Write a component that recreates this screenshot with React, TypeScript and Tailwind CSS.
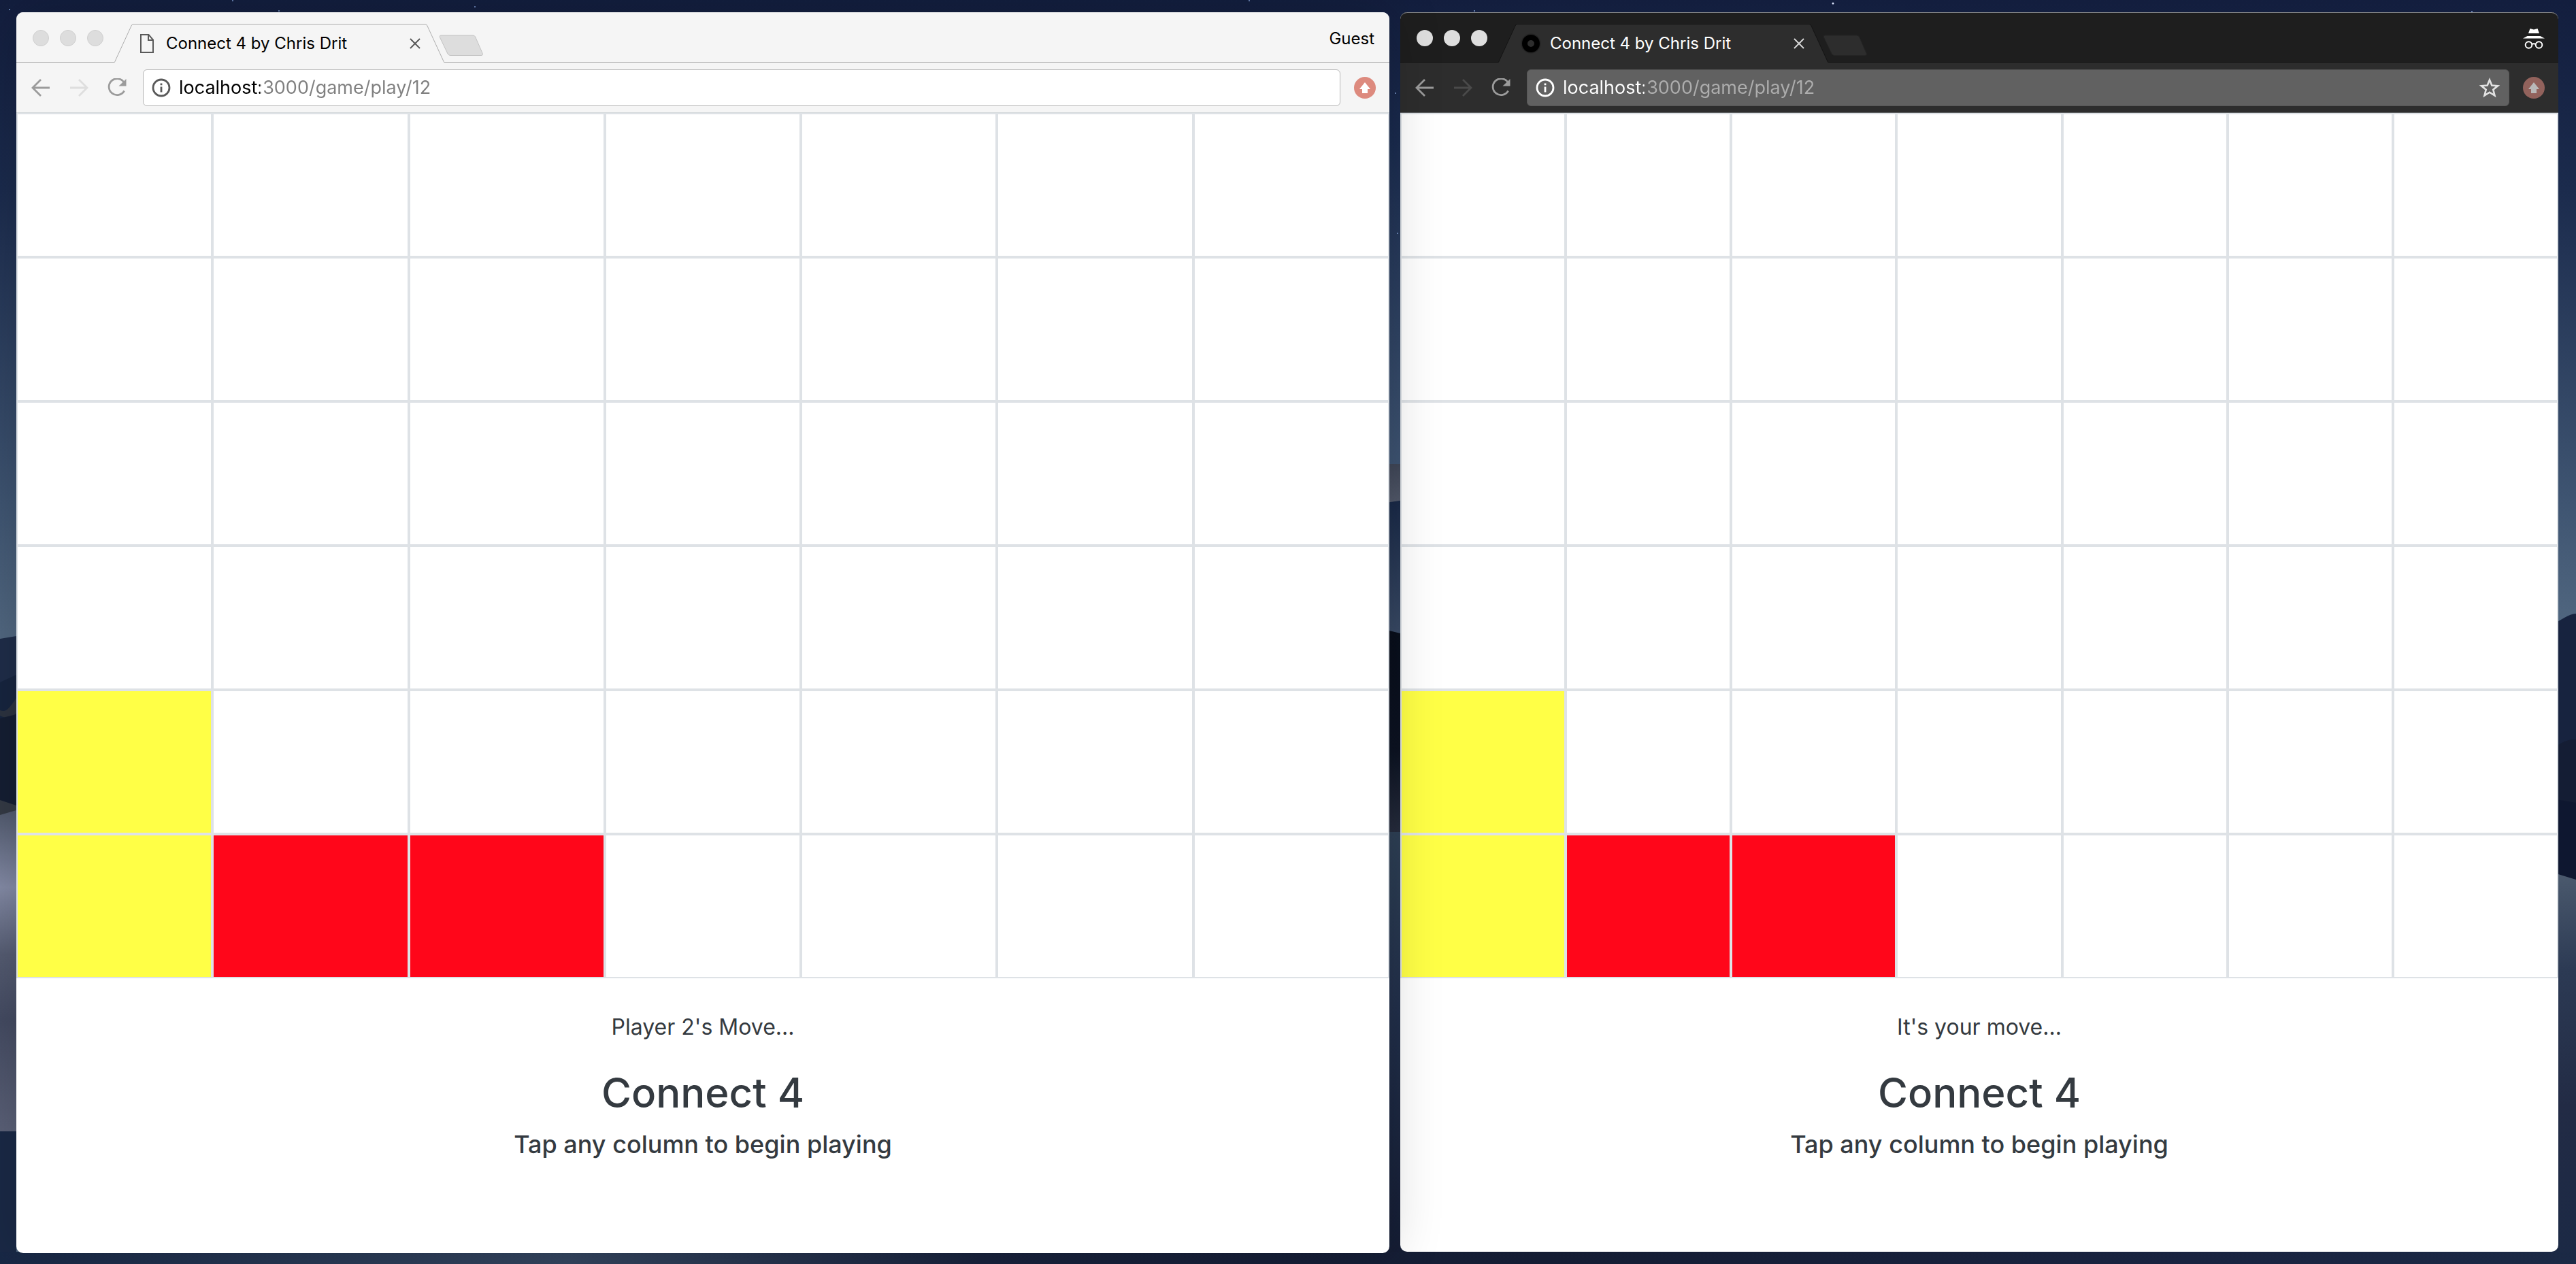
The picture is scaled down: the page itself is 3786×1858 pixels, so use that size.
import React from "react";

type Disc = "empty" | "yellow" | "red";

const COLUMNS: Disc[][] = [
  ["empty", "empty", "empty", "empty", "yellow", "yellow"],
  ["empty", "empty", "empty", "empty", "empty", "red"],
  ["empty", "empty", "empty", "empty", "empty", "red"],
  ["empty", "empty", "empty", "empty", "empty", "empty"],
  ["empty", "empty", "empty", "empty", "empty", "empty"],
  ["empty", "empty", "empty", "empty", "empty", "empty"],
  ["empty", "empty", "empty", "empty", "empty", "empty"],
];

const DISC_CLASS: Record<Disc, string> = {
  empty: "bg-white",
  yellow: "bg-[#ffff46]",
  red: "bg-[#ff061a]",
};

const LIGHT = {
  frame: "z-10 shadow-[0_0_80px_rgba(0,0,0,0.18)]",
  top: "border-transparent",
  strip: "bg-[#f5f5f5] border-[#acacac]",
  dot: "bg-[#dddddd] border border-[#cfcfcf]",
  tabFill: "#f5f5f5",
  tabStroke: "#acacac",
  title: "text-black",
  close: "#5a5a5a",
  newFill: "#dddddd",
  newStroke: "#c2c2c2",
  toolbar: "bg-[#f5f5f5] border-[#d5d9dc]",
  nav: "#9b9b9b",
  navOff: "#dedede",
  box: "bg-white border-[#b7b7b7]",
  info: "#5a5a5a",
  url: "bg-[linear-gradient(to_right,#000_0,#000_119px,#808080_119px)]",
  badge: "#dd8a7e",
  arrow: "#ffffff",
};

const DARK: typeof LIGHT = {
  frame: "mb-0.5",
  top: "border-[#8a8a8a]",
  strip: "bg-[#1e1e1e] border-[#141414]",
  dot: "bg-[#dedede]",
  tabFill: "#2d2d2d",
  tabStroke: "#141414",
  title: "text-white",
  close: "#d5d5d5",
  newFill: "#2d2d2d",
  newStroke: "#242424",
  toolbar: "bg-[#2d2d2d] border-[#5c5e60]",
  nav: "#9b9b9b",
  navOff: "#4a4a4a",
  box: "bg-[#616161] border-[#565656]",
  info: "#ffffff",
  url: "bg-[linear-gradient(to_right,#fff_0,#fff_119px,#adadad_119px)]",
  badge: "#92625c",
  arrow: "#b9b9b9",
};

function Wallpaper() {
  return (
    <svg
      className="absolute inset-0 h-full w-full"
      viewBox="0 0 3786 1858"
      preserveAspectRatio="none"
      aria-hidden="true"
    >
      <defs>
        <linearGradient id="sky" x1="0" y1="0" x2="0" y2="1">
          <stop offset="0" stopColor="#131e3e" />
          <stop offset="0.15" stopColor="#1b2b4d" />
          <stop offset="0.4" stopColor="#3f5572" />
          <stop offset="0.5" stopColor="#516780" />
        </linearGradient>
        <linearGradient id="skyMid" x1="0" y1="0" x2="0" y2="1">
          <stop offset="0" stopColor="#131e3e" />
          <stop offset="0.3" stopColor="#1a2b4e" />
          <stop offset="1" stopColor="#3e5472" />
        </linearGradient>
        <linearGradient id="dune" x1="0" y1="0" x2="0" y2="1">
          <stop offset="0" stopColor="#515a6e" />
          <stop offset="0.24" stopColor="#848ba6" />
          <stop offset="0.45" stopColor="#555c72" />
          <stop offset="0.65" stopColor="#444b62" />
          <stop offset="1" stopColor="#5b6178" />
        </linearGradient>
        <linearGradient id="ridge" x1="0" y1="0" x2="0" y2="1">
          <stop offset="0" stopColor="#3f4657" />
          <stop offset="1" stopColor="#535a6b" />
        </linearGradient>
        <linearGradient id="slope" x1="0" y1="0" x2="0" y2="1">
          <stop offset="0" stopColor="#192947" />
          <stop offset="1" stopColor="#3a4b66" />
        </linearGradient>
        <linearGradient id="shade" x1="0" y1="0" x2="0" y2="1">
          <stop offset="0" stopColor="#080e1b" />
          <stop offset="0.6" stopColor="#0c1322" />
          <stop offset="1" stopColor="#262c3d" />
        </linearGradient>
        <linearGradient id="sandMid" x1="0" y1="0" x2="0" y2="1">
          <stop offset="0" stopColor="#2e4055" />
          <stop offset="0.4" stopColor="#22304b" />
          <stop offset="1" stopColor="#141c33" />
        </linearGradient>
        <linearGradient id="sandRight" x1="0" y1="0" x2="0" y2="1">
          <stop offset="0" stopColor="#4b5a6e" />
          <stop offset="0.25" stopColor="#2c3a54" />
          <stop offset="0.6" stopColor="#222b45" />
          <stop offset="1" stopColor="#1b2945" />
        </linearGradient>
        <linearGradient id="floor" x1="0" y1="0" x2="1" y2="0">
          <stop offset="0" stopColor="#182846" />
          <stop offset="0.22" stopColor="#34455f" />
          <stop offset="0.38" stopColor="#18223c" />
          <stop offset="0.6" stopColor="#141c33" />
          <stop offset="0.85" stopColor="#192340" />
          <stop offset="1" stopColor="#1b2945" />
        </linearGradient>
      </defs>
      <rect width="3786" height="1858" fill="url(#sky)" />
      <rect x="1000" width="1800" height="684" fill="url(#skyMid)" />
      <g>
        <path d="M0 939L24 935V1200H0Z" fill="#1f2d49" />
        <path d="M0 1003L24 992V1200H0Z" fill="#17253f" />
        <path d="M0 1044C10 1048 14 1040 24 1026V1048C16 1058 8 1056 0 1052Z" fill="#2c3340" />
        <path d="M0 1056L24 1050V1210H0Z" fill="#151e33" />
        <path d="M0 1176L24 1184V1200H0Z" fill="#343a45" />
        <path d="M0 1198L24 1191V1664H0Z" fill="url(#dune)" />
        <rect y="1663" width="24" height="195" fill="#1a2946" />
      </g>
      <g>
        <rect x="2030" y="682" width="40" height="60" fill="url(#ridge)" />
        <path d="M2030 740L2070 734V940H2030Z" fill="url(#slope)" />
        <path d="M2030 924L2070 934V1224H2030Z" fill="url(#shade)" />
        <rect x="2030" y="1223" width="40" height="635" fill="url(#sandMid)" />
      </g>
      <g>
        <path d="M3750 918C3765 912 3775 902 3786 902V1300H3750Z" fill="#17233f" />
        <path d="M3750 1102C3762 1092 3775 1086 3786 1087V1300H3750Z" fill="#141d34" />
        <path d="M3750 1174L3786 1180V1300H3750Z" fill="#0e1730" />
        <path d="M3750 1282L3786 1293V1858H3750Z" fill="url(#sandRight)" />
      </g>
      <rect y="1840" width="3786" height="18" fill="url(#floor)" />
      <g fill="#7f9cd0">
        <circle cx="14" cy="14" r="1" />
        <circle cx="342" cy="1" r="1" />
        <circle cx="410" cy="16" r="1" />
        <circle cx="698" cy="10" r="1" />
        <circle cx="1836" cy="1" r="1" />
        <circle cx="2167" cy="16" r="1" />
        <circle cx="2694" cy="5" r="1.5" fill="#dfe8ff" />
        <circle cx="3633" cy="17" r="1" />
        <circle cx="2051" cy="137" r="1" />
        <circle cx="2054" cy="343" r="1" />
      </g>
    </svg>
  );
}

function DocumentIcon() {
  return (
    <svg className="h-7 w-5" viewBox="0 0 20 28" fill="none" stroke="#5a5a5a" strokeWidth="2">
      <path d="M1 1H12.5L19 8.5V27H1Z" />
      <path d="M12 1V9H19" />
    </svg>
  );
}

function RingIcon() {
  return (
    <svg className="h-8 w-8 shrink-0" viewBox="0 0 32 32">
      <circle cx="16" cy="16" r="14.5" fill="#242424" />
      <circle cx="16" cy="16" r="9" fill="#2d2d2d" stroke="#000" strokeWidth="8" />
    </svg>
  );
}

function IncognitoIcon() {
  return (
    <svg className="h-8 w-8" viewBox="0 0 32 32">
      <path d="M10.5 1L16 2.6L21.5 1L24 8H8Z" fill="#fff" />
      <path d="M6.5 12H25.5L32 15.5H0Z" fill="#fff" />
      <g fill="none" stroke="#fff" strokeWidth="2">
        <circle cx="8.5" cy="25" r="4.8" />
        <circle cx="23.5" cy="25" r="4.8" />
        <path d="M13 24Q16 22.5 19 24" />
      </g>
    </svg>
  );
}

function ArrowIcon({ color, flip }: { color: string; flip?: boolean }) {
  return (
    <svg
      className={flip ? "h-7 w-7 rotate-180" : "h-7 w-7"}
      viewBox="0 0 28 28"
      fill="none"
      stroke={color}
      strokeWidth="2.8"
    >
      <path d="M27 14H2.5M14 2L2 14L14 26" />
    </svg>
  );
}

function ReloadIcon({ color }: { color: string }) {
  return (
    <svg className="h-7 w-7" viewBox="0 0 28 28">
      <path d="M23.8 5.5A12 12 0 1 0 24.6 18.5" fill="none" stroke={color} strokeWidth="2.8" />
      <path d="M27.5 1V11.5H16.5Z" fill={color} />
    </svg>
  );
}

function InfoIcon({ color }: { color: string }) {
  return (
    <svg className="h-7 w-7 shrink-0" viewBox="0 0 28 28">
      <circle cx="14" cy="14" r="12" fill="none" stroke={color} strokeWidth="2.8" />
      <path d="M12.6 12.5H15.4V20.5H12.6ZM12.6 7.5H15.4V10.3H12.6Z" fill={color} />
    </svg>
  );
}

function StarIcon() {
  return (
    <svg className="h-8 w-8" viewBox="0 0 32 32" fill="none" stroke="#e2e2e2" strokeWidth="2.6">
      <path d="M16 4.5L19.3 12.6L28 13.2L21.3 18.8L23.5 27.4L16 22.7L8.5 27.4L10.7 18.8L4 13.2L12.7 12.6Z" />
    </svg>
  );
}

function UploadBadge({ color, arrow }: { color: string; arrow: string }) {
  return (
    <svg className="h-8 w-8" viewBox="0 0 32 32">
      <circle cx="16" cy="16" r="16" fill={color} />
      <path d="M16 8L24 18H20V24H12V18H8Z" fill={arrow} />
    </svg>
  );
}

interface BrowserProps {
  name: string;
  incognito?: boolean;
  status: string;
}

function Browser({ name, incognito = false, status }: BrowserProps) {
  const t = incognito ? DARK : LIGHT;
  return (
    <section
      aria-label={name}
      className={`relative flex min-w-0 flex-col overflow-hidden rounded-[10px] bg-white ${t.frame}`}
    >
      <header>
        <div className={`flex h-[74px] items-end border-b pl-6 pr-5 ${t.strip}`}>
          <div className="flex h-full items-center gap-4 pb-px pt-1">
            <button aria-label="Close window" className={`size-6 rounded-full ${t.dot}`} />
            <button aria-label="Minimize window" className={`size-6 rounded-full ${t.dot}`} />
            <button aria-label="Zoom window" className={`size-6 rounded-full ${t.dot}`} />
          </div>
          <div className="relative -mb-px ml-4 h-[57px] w-[485px]">
            <svg className="absolute inset-0 h-full w-full" viewBox="0 0 485 57" aria-hidden="true">
              <path
                d="M0 57V56.5Q1 56.5 2 53L25 3Q26 .5 28 .5H457Q459 .5 460 3L483 53Q484 56.5 485 56.5V57Z"
                fill={t.tabFill}
              />
              <path
                d="M0 56.5Q1 56.5 2 53L25 3Q26 .5 28 .5H457Q459 .5 460 3L483 53Q484 56.5 485 56.5"
                fill="none"
                stroke={t.tabStroke}
              />
            </svg>
            <div className="relative flex h-full items-center pl-[38px] pr-[34px]">
              <span className="flex w-5 justify-center">{incognito ? <RingIcon /> : <DocumentIcon />}</span>
              <span className={`ml-4 flex-1 whitespace-nowrap pl-0.5 text-2xl leading-8 ${t.title}`}>
                Connect 4 by Chris Drit
              </span>
              <button aria-label="Close tab" className="p-px">
                <svg className="h-4 w-4" viewBox="0 0 16 16" stroke={t.close} strokeWidth="2">
                  <path d="M1 1L15 15M15 1L1 15" />
                </svg>
              </button>
            </div>
          </div>
          <button aria-label="New tab" className="relative -ml-2 mb-2">
            <svg className="h-8 w-[66px]" viewBox="0 0 66 32">
              <path
                d="M3 1H50Q52.5 1 53.5 3L64 27Q65.5 30.5 62 30.5H17Q14.5 30.5 13 28L1.5 4Q.5 1 3 1Z"
                fill={t.newFill}
                stroke={t.newStroke}
              />
            </svg>
          </button>
          <div className="ml-auto flex h-full items-center pt-1 text-2xl leading-8">
            {incognito ? <IncognitoIcon /> : <button className="mr-0.5 text-black">Guest</button>}
          </div>
        </div>
        <div className={`flex h-[74px] items-center border-b pl-[22px] pr-5 ${t.toolbar}`}>
          <nav aria-label="History" className="flex gap-7">
            <button aria-label="Back">
              <ArrowIcon color={t.nav} />
            </button>
            <button aria-label="Forward" disabled>
              <ArrowIcon color={t.navOff} flip />
            </button>
            <button aria-label="Reload">
              <ReloadIcon color={t.nav} />
            </button>
          </nav>
          <div className={`ml-6 mr-5 flex h-[54px] min-w-0 flex-1 items-center rounded-md border px-3 ${t.box}`}>
            <InfoIcon color={t.info} />
            <input
              aria-label="Address"
              type="text"
              defaultValue="localhost:3000/game/play/12"
              className={`ml-3 min-w-0 flex-1 bg-clip-text text-[27px] leading-9 text-transparent outline-none ${t.url}`}
            />
            {incognito && (
              <button aria-label="Bookmark this page">
                <StarIcon />
              </button>
            )}
          </div>
          <button aria-label="Extension">
            <UploadBadge color={t.badge} arrow={t.arrow} />
          </button>
        </div>
      </header>

      <main className="flex flex-1 flex-col">
        <div className="grid grid-cols-7">
          {COLUMNS.map((column, c) => (
            <button key={c} aria-label={`Column ${c + 1}`} className="flex flex-col">
              {column.map((disc, r) => (
                <span key={r} className={`h-[212px] w-full border-2 border-[#dee2e6] ${DISC_CLASS[disc]}`} />
              ))}
            </button>
          ))}
        </div>
        <div className="flex flex-col items-center pt-12 text-center text-[#343a40]">
          <p className="text-[32px] leading-[48px]">{status}</p>
          <h1 className="mt-8 text-[60px] font-medium leading-[80px]">Connect 4</h1>
          <h2 className="mt-3 text-[36px] font-medium leading-[48px]">Tap any column to begin playing</h2>
        </div>
      </main>
      <div className={`pointer-events-none absolute inset-x-0 top-0 h-4 rounded-t-[10px] border-t ${t.top}`} />
    </section>
  );
}

export default function App() {
  return (
    <div className="relative min-h-screen font-['Inter',sans-serif]">
      <Wallpaper />
      <div className="relative grid min-h-screen grid-cols-[2018fr_1702fr] gap-4 pb-4 pl-6 pr-[26px] pt-[18px]">
        <Browser name="Guest window" status="Player 2's Move..." />
        <Browser name="Incognito window" incognito status="It's your move..." />
      </div>
    </div>
  );
}
